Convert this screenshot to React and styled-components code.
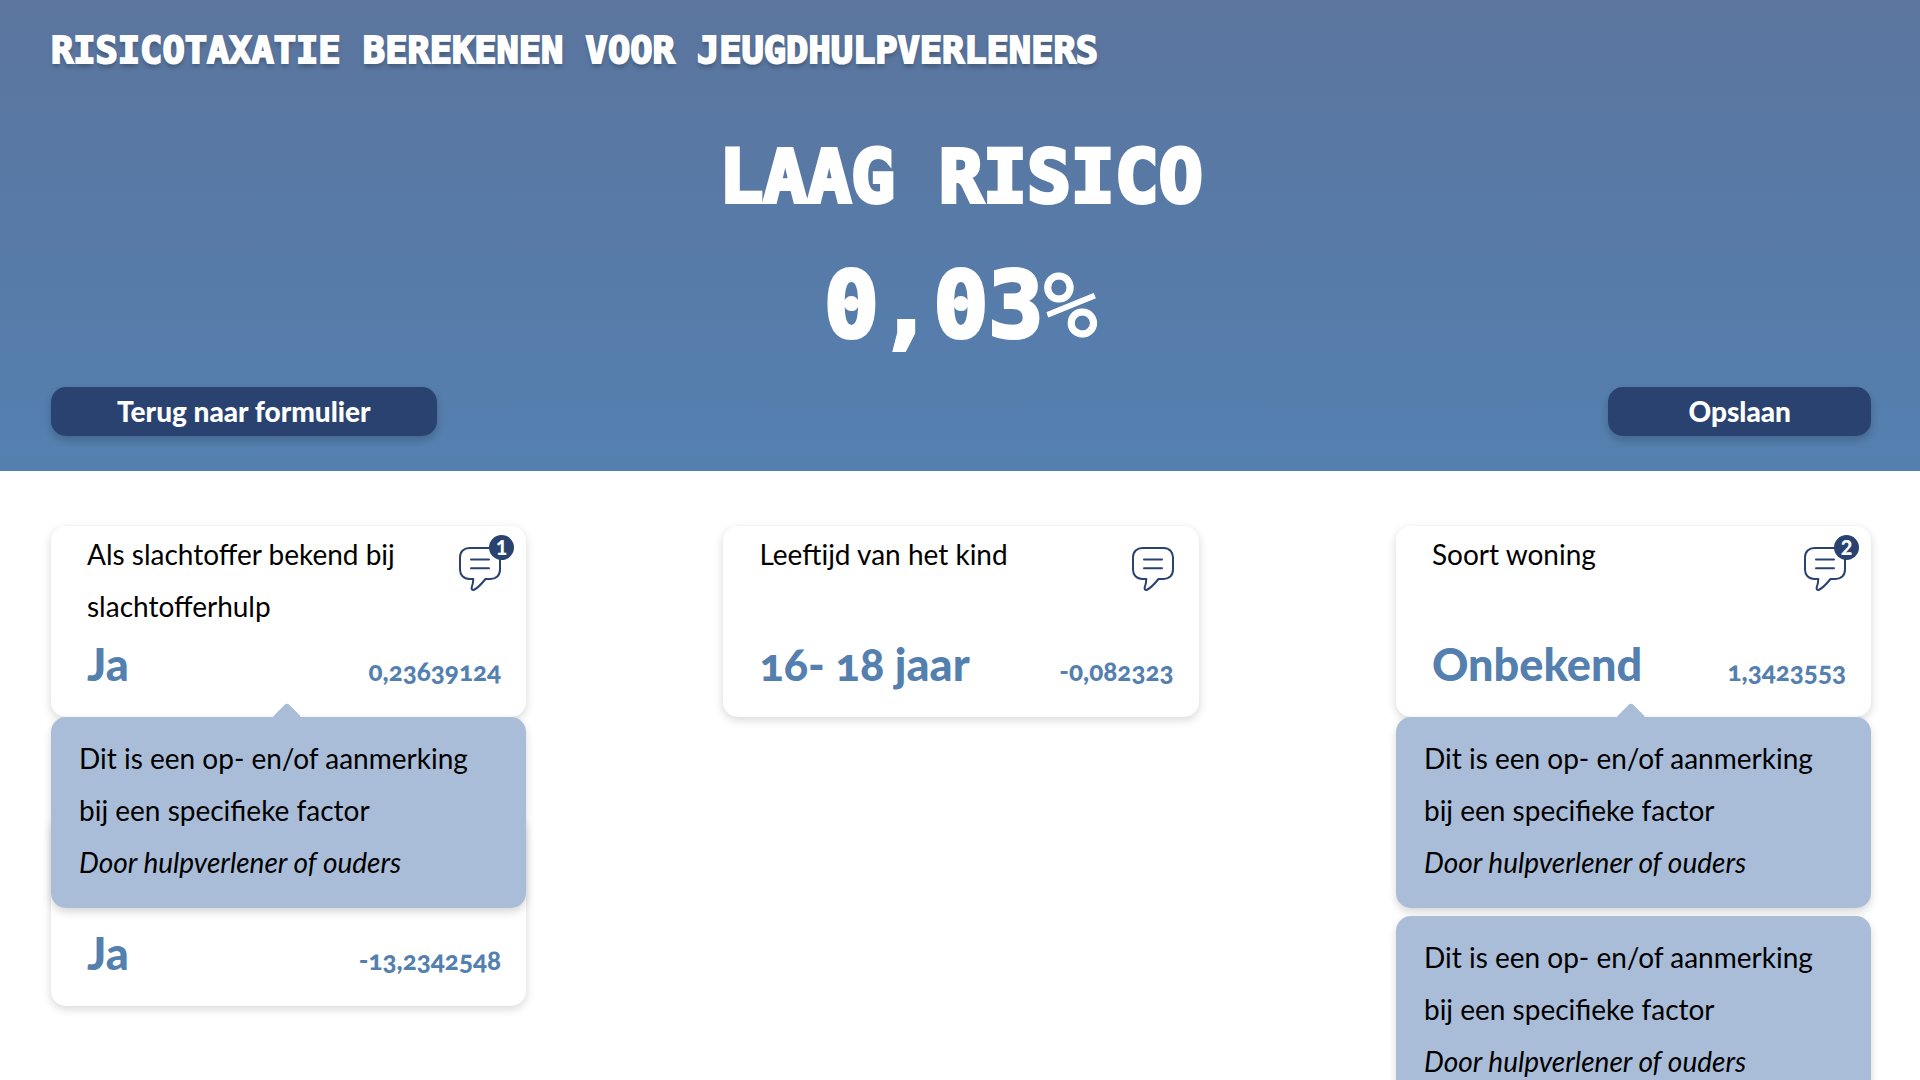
import React from "react";
import styled, { createGlobalStyle } from "styled-components";

const navy = "#2a426f";
const blue = "#5480b0";
const softBlue = "#a9bdd9";
const display = `"DejaVu Sans Mono", "Liberation Mono", monospace`;

const GlobalStyle = createGlobalStyle`
  * { box-sizing: border-box; }
  body {
    margin: 0;
    background: #fff;
    color: #000;
    font-family: Lato, "Open Sans", sans-serif;
    font-size: 28px;
    line-height: 52px;
  }
`;

const Page = styled.div`
  height: 100vh;
  overflow-y: auto;
  scrollbar-width: none;
`;

const Header = styled.header`
  display: flex;
  flex-direction: column;
  padding: 0 49px 35px 51px;
  color: #fff;
  background: linear-gradient(180deg, #5b759e 0%, ${blue} 100%);
`;

const Title = styled.h1`
  margin: 0 0 10px;
  font: 700 37px/102px ${display};
  text-transform: uppercase;
  text-shadow: 0 4px 4px rgba(0, 0, 0, 0.25);
  -webkit-text-stroke: 2px #fff;
`;

const Risk = styled.p`
  margin: 0;
  text-align: center;
  text-transform: uppercase;
  font: 700 73px/130px ${display};
  -webkit-text-stroke: 4px #fff;
`;

const Percentage = styled.p`
  margin: 0;
  text-align: center;
  font: 700 91px/128px ${display};
  -webkit-text-stroke: 4px #fff;
`;

const PercentSign = styled.span`
  font-weight: 400;
  -webkit-text-stroke: 1px #fff;
`;

const Actions = styled.div`
  display: flex;
  justify-content: space-between;
  margin-top: 17px;
`;

const ActionButton = styled.button`
  height: 49px;
  padding: 0 ${(p) => p.$pad}px;
  border: 0;
  border-radius: 15px;
  color: #fff;
  background: ${navy};
  box-shadow: 0 4px 8px rgba(0, 0, 0, 0.2);
  font: 900 28px/49px Lato, sans-serif;
  cursor: pointer;
`;

const Board = styled.main`
  display: flex;
  justify-content: space-between;
  align-items: flex-start;
  padding: 55px 49px 55px 51px;
`;

const Column = styled.div`
  display: flex;
  flex-direction: column;
  gap: 98px;
  width: 26.1%;
`;

const Factor = styled.section`
  position: relative;
  z-index: ${(p) => (p.$open ? 1 : 0)};
`;

const Card = styled.article`
  display: flex;
  flex-direction: column;
  justify-content: space-between;
  height: 191px;
  padding: 2px 25px 20px 36px;
  border-radius: 15px;
  background: #fff;
  box-shadow: 0 3px 10px rgba(0, 0, 0, 0.16);
`;

const CardTop = styled.div`
  display: flex;
  justify-content: space-between;
  align-items: flex-start;
`;

const CardTitle = styled.h2`
  margin: 0;
  max-width: 330px;
  font-size: 28px;
  font-weight: 400;
`;

const CardBottom = styled.div`
  display: flex;
  justify-content: space-between;
  align-items: baseline;
  color: ${blue};
  font-variant-numeric: oldstyle-nums;
`;

const Answer = styled.strong`
  font-size: 45px;
  font-weight: 900;
`;

const Weight = styled.span`
  font-size: 26px;
  font-weight: 900;
`;

const NoteButton = styled.button`
  position: relative;
  display: block;
  flex: none;
  width: 42px;
  height: 44px;
  margin: 19px 0 0;
  padding: 0;
  border: 0;
  background: none;
  cursor: pointer;
`;

const Badge = styled.span`
  position: absolute;
  top: -12px;
  right: -13px;
  width: 25px;
  height: 25px;
  border-radius: 50%;
  color: #fff;
  background: ${navy};
  font: 900 20px/25px Lato, sans-serif;
  text-align: center;
`;

const Notes = styled.div`
  position: absolute;
  top: 100%;
  left: 0;
  right: 0;
  display: flex;
  flex-direction: column;
  gap: 8px;

  &::before {
    content: "";
    position: absolute;
    top: -10px;
    left: calc(50% - 13px);
    width: 22px;
    height: 22px;
    border-radius: 4px;
    background: ${softBlue};
    transform: rotate(45deg);
  }
`;

const Note = styled.div`
  padding: 15px 20px 20px 28px;
  border-radius: 15px;
  background: ${softBlue};
  box-shadow: 0 4px 8px rgba(0, 0, 0, 0.16);
`;

const NoteText = styled.p`
  margin: 0;
`;

const NoteAuthor = styled.em`
  display: block;
`;

function SpeechIcon() {
  return (
    <svg width="42" height="44" viewBox="0 0 42 44" fill="none" stroke={navy} strokeWidth="2" strokeLinecap="round" strokeLinejoin="round" aria-hidden="true">
      <path d="M10.500 1 H31.500 C37.500 1 41 5 41 10.500 V22.500 C41 28.500 37 32 31.500 32 H26.500 C22 37.500 18.500 41 15.500 42.500 C13.500 43.500 12.300 42.600 12.700 40.500 C13.700 37.500 14.300 35 14.300 32 H10.500 C4.500 32 1 28 1 22.500 V10.500 C1 4.500 5 1 10.500 1 Z" />
      <path d="M12 12.500 H30 M12 21.300 H30" />
    </svg>
  );
}

function FactorCard({ title, answer, weight, notes = 0 }) {
  return (
    <Factor $open={notes > 0}>
      <Card>
        <CardTop>
          <CardTitle>{title}</CardTitle>
          {title && (
            <NoteButton type="button" aria-label="Opmerkingen">
              <SpeechIcon />
              {notes > 0 && <Badge>{notes}</Badge>}
            </NoteButton>
          )}
        </CardTop>
        <CardBottom>
          <Answer>{answer}</Answer>
          <Weight>{weight}</Weight>
        </CardBottom>
      </Card>
      {notes > 0 && (
        <Notes>
          {Array.from({ length: notes }, (_, i) => (
            <Note key={i}>
              <NoteText>
                Dit is een op- en/of aanmerking
                <br />
                bij een specifieke factor
              </NoteText>
              <NoteAuthor>Door hulpverlener of ouders</NoteAuthor>
            </Note>
          ))}
        </Notes>
      )}
    </Factor>
  );
}

export default function App() {
  return (
    <Page>
      <GlobalStyle />
      <Header>
        <Title>Risicotaxatie berekenen voor jeugdhulpverleners</Title>
        <Risk>Laag risico</Risk>
        <Percentage>
          0,03<PercentSign>%</PercentSign>
        </Percentage>
        <Actions>
          <ActionButton type="button" $pad={66}>Terug naar formulier</ActionButton>
          <ActionButton type="button" $pad={80}>Opslaan</ActionButton>
        </Actions>
      </Header>
      <Board>
        <Column>
          <FactorCard title="Als slachtoffer bekend bij slachtofferhulp" answer="Ja" weight="0,23639124" notes={1} />
          <FactorCard answer="Ja" weight="-13,2342548" />
        </Column>
        <Column>
          <FactorCard title="Leeftijd van het kind" answer="16- 18 jaar" weight="-0,082323" />
        </Column>
        <Column>
          <FactorCard title="Soort woning" answer="Onbekend" weight="1,3423553" notes={2} />
        </Column>
      </Board>
    </Page>
  );
}
